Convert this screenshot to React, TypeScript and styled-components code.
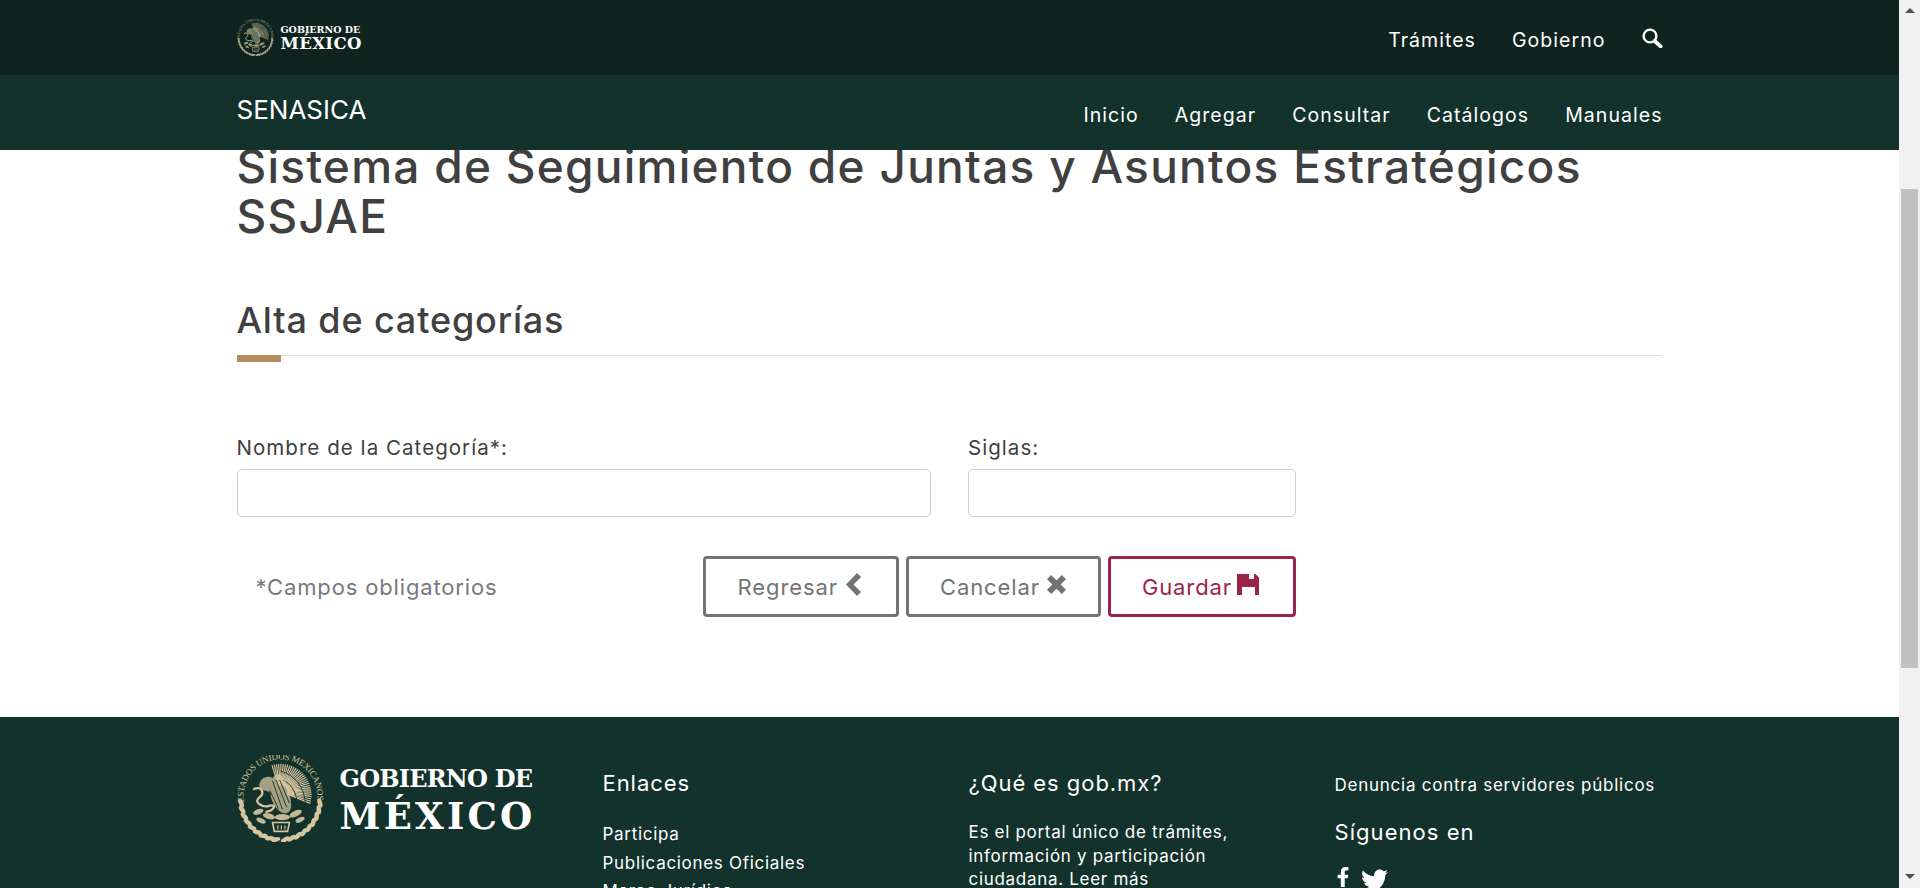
import styled, { createGlobalStyle } from 'styled-components';
import { FaFacebookF, FaTwitter } from 'react-icons/fa';

const GlobalStyle = createGlobalStyle`
  html, body {
    margin: 0;
    height: 100%;
    overflow: hidden;
    background: #fff;
  }
  body {
    font-family: Inter, "Liberation Sans", sans-serif;
    color: #404041;
  }
  * {
    box-sizing: border-box;
  }
`;

const leafAngles = [4, 14, 24, 34, 44, 54, 64, 74, 83, 97, 106, 116, 126, 136, 146, 156, 166, 176];
const featherAngles = Array.from({ length: 30 }, (_, i) => -106 + i * 4.2);

const Seal = ({ color, size }: { color: string; size: number }) => (
  <svg width={size} height={size} viewBox="3 2 94 98" fill="none" aria-hidden="true">
    <path id={`ring-${size}`} d="M9 55 A41.5 41.5 0 1 1 91 55" />
    <text fill={color} fontFamily="Liberation Serif, serif" fontSize="10">
      <textPath href={`#ring-${size}`} textLength="141" lengthAdjust="spacing">
        ESTADOS UNIDOS MEXICANOS
      </textPath>
    </text>
    {/* ala */}
    <g stroke={color} strokeWidth="1.3">
      {featherAngles.map((angle) => {
        const rad = (angle * Math.PI) / 180;
        return (
          <line
            key={angle}
            x1={50 + 8 * Math.cos(rad)}
            y1={44 + 8 * Math.sin(rad)}
            x2={50 + 35 * Math.cos(rad)}
            y2={47 + 35 * Math.sin(rad)}
          />
        );
      })}
    </g>
    <path d="M50 20 C67 25 76 38 78 55 M52 30 C62 34 68 44 69 57" stroke="#13322b" strokeWidth="1" />
    {/* cuerpo y cabeza */}
    <path
      d="M26 37 C26 28 35 24 41 28 C46 22 52 23 54 30 C58 38 62 48 62 58 C62 67 56 70 50 66 C44 62 38 52 39 44 C35 42 28 43 26 37 Z"
      fill={color}
      fillOpacity="0.75"
    />
    <path d="M41 31 L52 63 M45 30 L57 61 M49 30 L60 56 M38 42 L48 63" stroke="#13322b" strokeWidth="1" />
    {/* serpiente */}
    <path d="M19 41 C29 35 33 46 26 50 C19 55 30 62 38 59 C46 57 43 65 33 66" stroke={color} strokeWidth="2.6" />
    {/* nopal */}
    <g fill={color} fillOpacity="0.9">
      <ellipse cx="25" cy="66" rx="6" ry="3" transform="rotate(-20 25 66)" />
      <ellipse cx="37" cy="71" rx="7" ry="3.2" transform="rotate(15 37 71)" />
      <ellipse cx="52" cy="72" rx="8.5" ry="3.4" />
      <ellipse cx="67" cy="68" rx="7.5" ry="3.2" transform="rotate(-25 67 68)" />
      <ellipse cx="28" cy="76" rx="5.5" ry="2.6" transform="rotate(25 28 76)" />
      <ellipse cx="72" cy="75" rx="5.5" ry="2.6" transform="rotate(-25 72 75)" />
    </g>
    {/* piedra */}
    <path d="M41 78 H60 L58 88 H43 Z" stroke={color} strokeWidth="1.8" />
    <path d="M47 81 V86 M51 81 V86 M55 81 V86" stroke={color} strokeWidth="1.3" />
    {/* corona */}
    <g fill={color}>
      {leafAngles.map((angle) => {
        const rad = (angle * Math.PI) / 180;
        const x = 50 + 44.5 * Math.cos(rad);
        const y = 53 + 44.5 * Math.sin(rad);
        return (
          <ellipse key={angle} cx={x} cy={y} rx="5.4" ry="2.6" transform={`rotate(${angle + 70} ${x} ${y})`} />
        );
      })}
    </g>
  </svg>
);

const SearchIcon = () => (
  <svg width="21" height="20" viewBox="0 0 21 20" fill="none" aria-hidden="true">
    <circle cx="8" cy="8" r="6.4" stroke="#fff" strokeWidth="2.4" />
    <path d="M12.6 13 L18.6 18.4" stroke="#fff" strokeWidth="3.8" strokeLinecap="round" />
  </svg>
);

const ChevronIcon = () => (
  <svg width="15" height="23" viewBox="0 0 15 23" fill="currentColor" aria-hidden="true">
    <polygon points="11,0 15,4 7.5,11.5 15,19 11,23 0,11.5" />
  </svg>
);

const RemoveIcon = () => (
  <svg width="19" height="19" viewBox="0 0 20 20" fill="currentColor" aria-hidden="true">
    <path d="M4.4 0 L10 5.6 L15.6 0 L20 4.4 L14.4 10 L20 15.6 L15.6 20 L10 14.4 L4.4 20 L0 15.6 L5.6 10 L0 4.4 Z" />
  </svg>
);

const FloppyIcon = () => (
  <svg width="22" height="21" viewBox="0 0 22 21" fill="currentColor" aria-hidden="true">
    <path d="M0 0 H12 V5 H17 V0 H18.5 L22 3.5 V21 H18 V13 H5 V21 H0 Z" />
  </svg>
);

const App = () => {
  return (
    <>
      <GlobalStyle />
      <Page>
        <Viewport>
          <TopBar>
            <Bar>
              <Brand>
                <Seal color="#a8a284" size={37} />
                <BrandText>
                  <BrandSmall>GOBIERNO DE</BrandSmall>
                  <BrandBig>MÉXICO</BrandBig>
                </BrandText>
              </Brand>
              <TopLinks>
                <NavLink>Trámites</NavLink>
                <NavLink>Gobierno</NavLink>
                <SearchButton>
                  <SearchIcon />
                </SearchButton>
              </TopLinks>
            </Bar>
          </TopBar>
          <SubBar>
            <Bar>
              <SiteName>SENASICA</SiteName>
              <SubLinks>
                <NavLink>Inicio</NavLink>
                <NavLink>Agregar</NavLink>
                <NavLink>Consultar</NavLink>
                <NavLink>Catálogos</NavLink>
                <NavLink>Manuales</NavLink>
              </SubLinks>
            </Bar>
          </SubBar>
          <Main>
            <Container>
              <Title>
                Sistema de Seguimiento de Juntas y Asuntos Estratégicos
                <br />
                SSJAE
              </Title>
              <SectionTitle>Alta de categorías</SectionTitle>
              <Accent />
              <Form>
                <Fields>
                  <Field>
                    <Label htmlFor="nombre">Nombre de la Categoría*:</Label>
                    <Input id="nombre" type="text" />
                  </Field>
                  <Field>
                    <Label htmlFor="siglas">Siglas:</Label>
                    <Input id="siglas" type="text" />
                  </Field>
                </Fields>
                <Actions>
                  <Note>*Campos obligatorios</Note>
                  <Buttons>
                    <ActionButton type="button" $gap={8} $left={32} $right={35}>
                      Regresar
                      <ChevronIcon />
                    </ActionButton>
                    <ActionButton type="button" $gap={7} $left={31} $right={32}>
                      Cancelar
                      <RemoveIcon />
                    </ActionButton>
                    <ActionButton type="submit" $primary $gap={5} $left={31} $right={34}>
                      Guardar
                      <FloppyIcon />
                    </ActionButton>
                  </Buttons>
                </Actions>
              </Form>
            </Container>
          </Main>
          <Footer>
            <FooterGrid>
              <FooterBrand>
                <Seal color="#d6c6a0" size={87} />
                <FooterBrandText>
                  <FooterBrandSmall>GOBIERNO DE</FooterBrandSmall>
                  <FooterBrandBig>MÉXICO</FooterBrandBig>
                </FooterBrandText>
              </FooterBrand>
              <FooterColumn>
                <FooterHeading>Enlaces</FooterHeading>
                <FooterLink>Participa</FooterLink>
                <FooterLink>Publicaciones Oficiales</FooterLink>
                <FooterLink>Marco Jurídico</FooterLink>
              </FooterColumn>
              <FooterColumn>
                <FooterHeading>¿Qué es gob.mx?</FooterHeading>
                <FooterText>
                  Es el portal único de trámites,
                  <br />
                  información y participación
                  <br />
                  ciudadana. Leer más
                </FooterText>
              </FooterColumn>
              <FooterColumn>
                <Denuncia>Denuncia contra servidores públicos</Denuncia>
                <FollowHeading>Síguenos en</FollowHeading>
                <Social>
                  <FaFacebookF size={20} />
                  <FaTwitter size={27} />
                </Social>
              </FooterColumn>
            </FooterGrid>
          </Footer>
        </Viewport>
        <Scrollbar>
          <ArrowUp />
          <Thumb />
          <ArrowDown />
        </Scrollbar>
      </Page>
    </>
  );
};

export default App;

const Page = styled.div`
  display: flex;
  height: 100vh;
  overflow: hidden;
`;

const Viewport = styled.div`
  flex: 1;
  min-width: 0;
  display: flex;
  flex-direction: column;
`;

const TopBar = styled.header`
  flex: none;
  height: 75px;
  background: #0f241e;
  color: #fff;
`;

const SubBar = styled.nav`
  flex: none;
  height: 75px;
  background: #13322b;
  color: #fff;
`;

const Bar = styled.div`
  width: 1426px;
  height: 100%;
  margin-left: 236.5px;
  display: flex;
  justify-content: space-between;
`;

const Brand = styled.div`
  display: flex;
  align-items: center;
  gap: 7px;
  height: 74px;
`;

const BrandText = styled.div`
  display: flex;
  flex-direction: column;
  font-family: "DejaVu Serif", serif;
  font-weight: 700;
  color: #fff;
`;

const BrandSmall = styled.span`
  font-size: 9.5px;
  line-height: 13px;
  letter-spacing: 0;
`;

const BrandBig = styled.span`
  font-size: 16.5px;
  line-height: 16px;
  letter-spacing: 0.4px;
`;

const TopLinks = styled.div`
  display: flex;
  align-items: center;
  gap: 36px;
  height: 79px;
`;

const SubLinks = styled.div`
  display: flex;
  align-items: center;
  gap: 36px;
  height: 80px;
`;

const NavLink = styled.a`
  font-size: 19.5px;
  letter-spacing: 1.05px;
  color: #fff;
`;

const SearchButton = styled.span`
  display: flex;
  margin-top: -3px;
`;

const SiteName = styled.div`
  font-size: 26px;
  line-height: 70px;
  font-weight: 400;
`;

const Main = styled.main`
  flex: 1;
  min-height: 0;
  overflow: hidden;
  background: #fff;
`;

const Container = styled.div`
  width: 1425.5px;
  margin-left: 236.5px;
`;

const Title = styled.h1`
  margin: -9px 0 0;
  font-size: 46px;
  line-height: 50px;
  font-weight: 500;
  letter-spacing: 1.27px;
  color: #404041;
  white-space: nowrap;
`;

const SectionTitle = styled.h2`
  margin: 59px 0 0;
  padding-bottom: 15px;
  font-size: 36px;
  line-height: 40px;
  font-weight: 500;
  letter-spacing: 0.85px;
  color: #404041;
  border-bottom: 1px solid #dcdcdc;
`;

const Accent = styled.div`
  width: 44px;
  height: 7px;
  margin-top: -1px;
  background: #b38e5d;
`;

const Form = styled.form`
  width: 1059.5px;
  margin-top: 74px;
`;

const Fields = styled.div`
  display: grid;
  grid-template-columns: 694px 328px;
  column-gap: 37.5px;
`;

const Field = styled.div`
  display: flex;
  flex-direction: column;
  gap: 9px;
`;

const Label = styled.label`
  font-size: 20.5px;
  line-height: 24px;
  letter-spacing: 1.05px;
  color: #404041;
`;

const Input = styled.input`
  height: 48px;
  padding: 0 12px;
  border: 1px solid #ccc;
  border-radius: 5px;
  background: #fff;
  outline: none;
`;

const Actions = styled.div`
  display: flex;
  justify-content: space-between;
  align-items: center;
  margin-top: 39px;
`;

const Note = styled.span`
  padding-left: 19px;
  font-size: 22px;
  letter-spacing: 0.85px;
  color: #77797b;
`;

const Buttons = styled.div`
  display: flex;
  gap: 7px;
`;

const ActionButton = styled.button<{ $primary?: boolean; $gap: number; $left: number; $right: number }>`
  display: flex;
  align-items: center;
  gap: ${(p) => p.$gap}px;
  height: 61px;
  padding: 0 ${(p) => p.$right}px 0 ${(p) => p.$left}px;
  border: 3px solid ${(p) => (p.$primary ? '#9d2449' : '#737373')};
  border-radius: 4px;
  background: #fff;
  font-family: inherit;
  font-size: 22px;
  letter-spacing: 0.9px;
  color: ${(p) => (p.$primary ? '#9d2449' : '#737373')};

  svg {
    margin-top: -4px;
  }
`;

const Footer = styled.footer`
  flex: none;
  height: 171px;
  overflow: hidden;
  background: #13322b;
  color: #fff;
`;

const FooterGrid = styled.div`
  width: 1426px;
  margin-left: 236.5px;
  display: grid;
  grid-template-columns: 366px 366px 366px 1fr;
`;

const FooterBrand = styled.div`
  display: flex;
  align-items: flex-start;
  gap: 16px;
  padding-top: 38px;
`;

const FooterBrandText = styled(BrandText)`
  padding-top: 9px;
`;

const FooterBrandSmall = styled.span`
  font-size: 24px;
  line-height: 30px;
  letter-spacing: -0.8px;
`;

const FooterBrandBig = styled.span`
  font-size: 37px;
  line-height: 44px;
  letter-spacing: 3.2px;
`;

const FooterColumn = styled.div`
  display: flex;
  flex-direction: column;
  padding-top: 53px;
`;

const FooterHeading = styled.h3`
  margin: 0 0 24px;
  font-size: 22px;
  line-height: 26px;
  font-weight: 400;
  letter-spacing: 0.95px;
`;

const FooterLink = styled.a`
  font-size: 17px;
  line-height: 28.5px;
  letter-spacing: 0.7px;
`;

const FooterText = styled.p`
  margin: 1px 0 0;
  font-size: 17px;
  line-height: 23.5px;
  letter-spacing: 0.7px;
`;

const Denuncia = styled.a`
  margin-top: 2px;
  font-size: 17px;
  line-height: 26px;
  letter-spacing: 0.75px;
`;

const FollowHeading = styled.h3`
  margin: 21px 0 0;
  font-size: 22px;
  line-height: 26px;
  font-weight: 400;
  letter-spacing: 1.05px;
`;

const Social = styled.div`
  display: flex;
  align-items: flex-start;
  gap: 8px;
  margin-top: 22px;
  margin-left: -2px;
`;

const Scrollbar = styled.div`
  flex: none;
  width: 21px;
  height: 100%;
  padding: 8px 2px 9px;
  display: flex;
  flex-direction: column;
  align-items: center;
  background: #f1f1f1;
`;

const ArrowUp = styled.div`
  width: 0;
  height: 0;
  border-left: 5px solid transparent;
  border-right: 5px solid transparent;
  border-bottom: 5px solid #505050;
`;

const ArrowDown = styled.div`
  width: 0;
  height: 0;
  margin-top: auto;
  border-left: 5px solid transparent;
  border-right: 5px solid transparent;
  border-top: 5px solid #505050;
`;

const Thumb = styled.div`
  width: 100%;
  height: 479px;
  margin-top: 176px;
  background: #c1c1c1;
`;
